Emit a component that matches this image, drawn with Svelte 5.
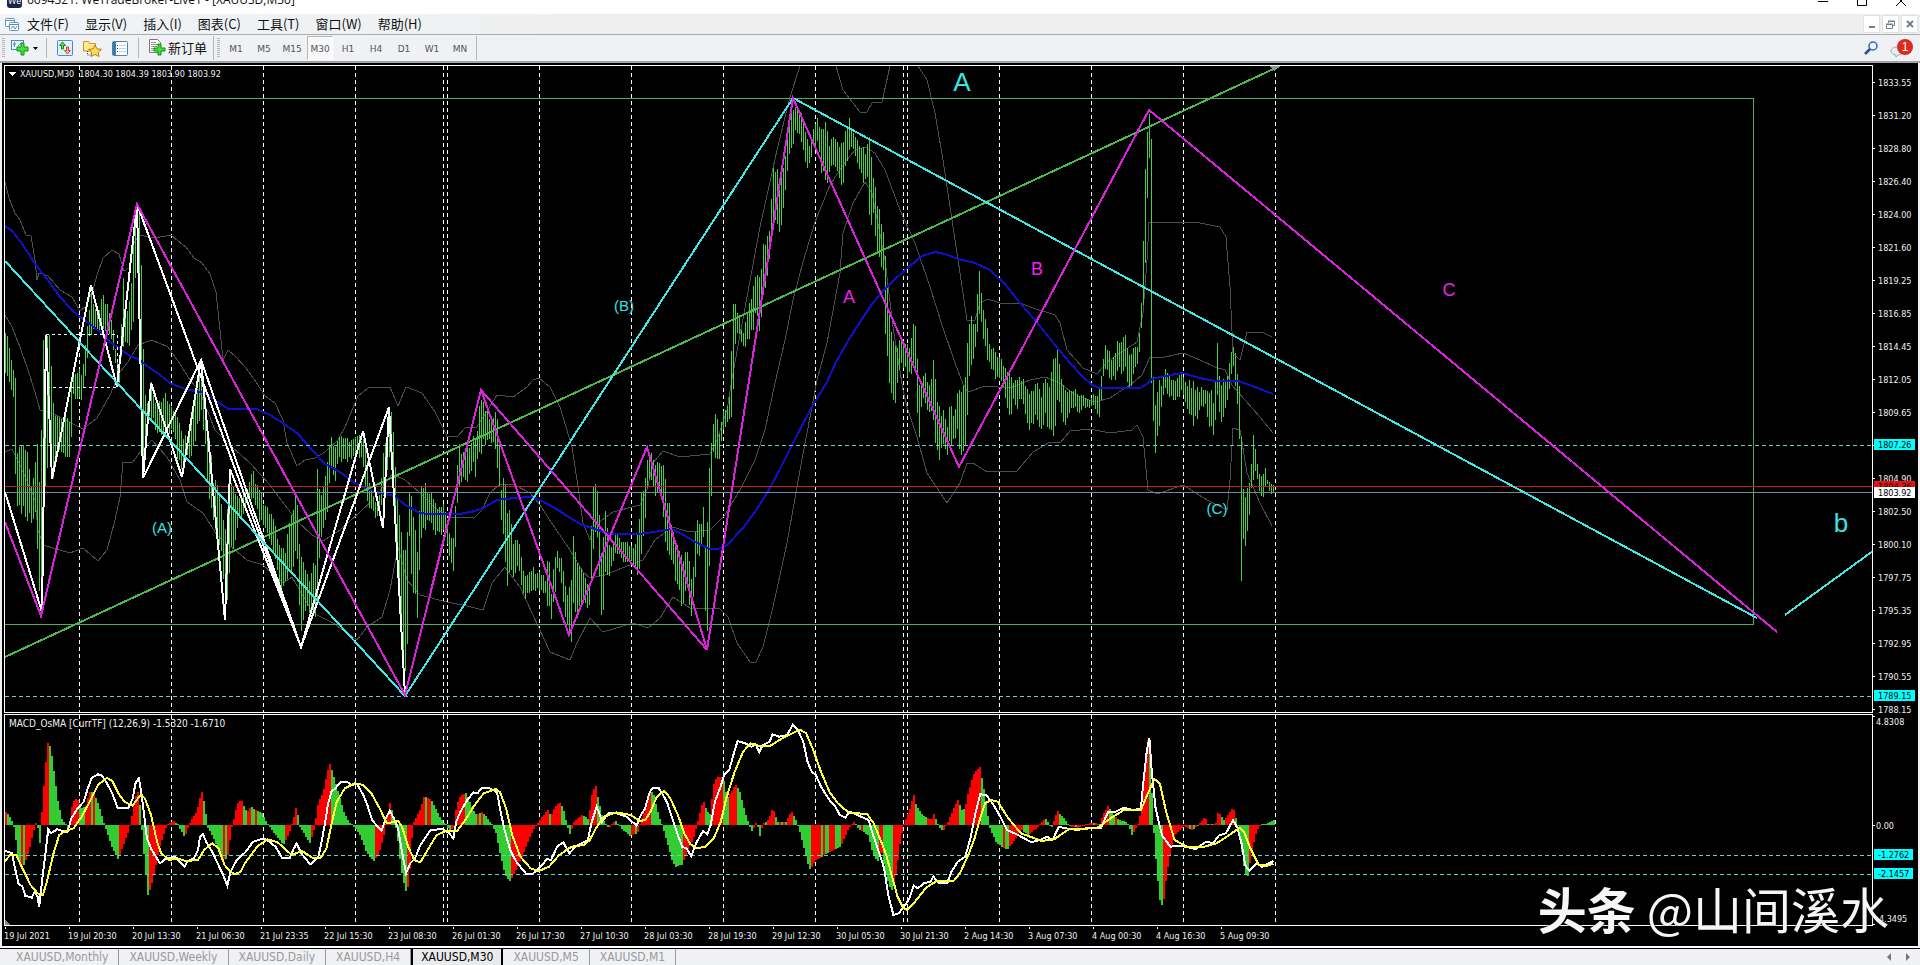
<script lang="ts">
  type Point = [number, number];
  type Bar = [number, number, number];

  const menus = ["文件(F)", "显示(V)", "插入(I)", "图表(C)", "工具(T)", "窗口(W)", "帮助(H)"];
  const timeframes = ["M1", "M5", "M15", "M30", "H1", "H4", "D1", "W1", "MN"];
  const tabs = ["Monthly", "Weekly", "Daily", "H4", "M30", "M5", "M1"];

  let activeFrame: string = "M30";
  let activeTab: string = "M30";

  const priceLabels = [
    "1833.55", "1831.20", "1828.80", "1826.40", "1824.00", "1821.60", "1819.25",
    "1816.85", "1814.45", "1812.05", "1809.65", "", "1804.90", "1802.50",
    "1800.10", "1797.75", "1795.35", "1792.95", "1790.55", "1788.15",
  ];

  const dates = [
    "19 Jul 2021", "19 Jul 20:30", "20 Jul 13:30", "21 Jul 06:30", "21 Jul 23:35",
    "22 Jul 15:30", "23 Jul 08:30", "26 Jul 01:30", "26 Jul 17:30", "27 Jul 10:30",
    "28 Jul 03:30", "28 Jul 19:30", "29 Jul 12:30", "30 Jul 05:30", "30 Jul 21:30",
    "2 Aug 14:30", "3 Aug 07:30", "4 Aug 00:30", "4 Aug 16:30", "5 Aug 09:30",
  ];

  const separators = [79, 171, 263, 355, 443, 447, 539, 631, 723, 815, 903, 907, 999, 1091, 1183, 1275];

  // x, high, low of the price range
  const range: Bar[] = [
    [5,335,368],[8,345,385],[12,362,392],[14,370,405],[15,380,475],[17,455,500],[22,445,510],[27,460,515],[32,490,523],
    [35,462,510],[37,440,550],[40,500,605],[42,350,610],[44,340,500],[46,334,480],[50,345,420],[52,400,478],[57,420,450],
    [62,425,450],[66,420,453],[69,425,453],[70,385,450],[73,375,395],[78,372,395],[82,378,400],[84,355,380],[86,340,370],
    [90,295,330],[94,305,325],[98,318,330],[101,296,325],[104,300,325],[108,305,330],[112,325,340],[115,350,365],
    [118,365,390],[120,340,370],[123,285,345],[126,320,343],[130,300,340],[133,240,320],[136,210,260],[138,205,260],
    [140,225,300],[142,300,470],[144,390,460],[147,400,430],[150,385,415],[155,400,425],[160,405,435],[165,395,430],
    [170,405,430],[175,412,440],[180,430,470],[184,440,460],[190,430,455],[195,400,440],[200,365,410],[204,385,430],
    [208,430,500],[213,480,520],[220,500,540],[225,530,610],[228,500,590],[230,480,545],[233,490,550],[238,500,520],
    [243,495,515],[248,485,500],[252,473,495],[258,490,515],[264,505,525],[270,515,540],[276,530,560],[280,555,590],
    [285,550,585],[290,520,570],[295,500,555],[298,520,560],[300,560,640],[304,565,610],[308,580,605],[312,570,615],
    [315,560,620],[317,475,600],[320,490,540],[324,490,530],[328,450,500],[330,437,460],[334,445,485],[338,435,455],
    [342,435,460],[348,442,460],[353,440,455],[357,435,455],[362,440,460],[365,450,490],[370,490,510],[375,500,515],
    [380,495,510],[384,445,490],[386,435,480],[388,410,450],[392,420,480],[396,490,540],[400,520,600],[404,560,690],
    [407,530,640],[409,495,540],[412,505,590],[415,530,590],[417,550,610],[420,490,550],[424,485,525],[428,490,520],
    [432,500,525],[436,510,532],[440,505,535],[444,500,530],[448,535,550],[452,540,565],[454,535,570],[456,480,520],
    [458,450,495],[462,450,475],[466,455,485],[470,445,470],[474,430,460],[476,440,480],[478,420,445],[480,395,465],
    [482,400,440],[486,412,445],[492,420,440],[496,412,450],[499,435,490],[501,490,525],[504,480,545],[507,510,590],
    [510,515,560],[513,540,575],[518,545,565],[521,555,580],[524,580,597],[530,568,590],[535,572,588],[540,575,590],
    [545,580,595],[548,555,600],[551,590,620],[554,560,600],[557,552,570],[561,560,580],[565,590,615],[568,600,630],
    [571,575,635],[573,540,600],[576,560,615],[579,565,610],[582,575,600],[585,580,600],[588,590,615],[590,570,600],
    [592,485,560],[595,480,530],[598,490,535],[600,550,610],[602,560,620],[604,505,590],[606,520,560],[608,545,580],
    [612,545,560],[616,530,550],[620,545,558],[625,545,565],[630,545,558],[634,545,565],[636,550,575],[638,530,570],
    [640,503,560],[644,490,530],[646,465,510],[648,450,475],[652,460,485],[656,465,495],[659,460,490],[662,468,500],
    [664,475,525],[667,500,555],[670,515,550],[674,540,575],[678,550,580],[682,560,610],[686,550,580],[690,570,620],
    [692,590,610],[695,530,580],[697,520,555],[700,530,550],[703,510,540],[706,560,640],[708,480,610],[710,460,520],
    [712,440,480],[713,420,455],[715,415,455],[718,430,455],[720,435,455],[722,410,430],[726,410,425],[730,395,420],
    [732,308,415],[735,310,345],[738,315,330],[742,335,345],[746,320,345],[749,305,335],[753,290,325],[757,275,310],
    [760,285,330],[762,245,305],[766,250,280],[768,225,260],[770,230,250],[772,165,210],[776,175,220],[780,180,225],
    [784,165,195],[787,140,175],[790,110,145],[794,105,135],[798,112,130],[802,115,145],[806,140,165],[810,145,160],
    [814,125,145],[817,118,140],[821,135,170],[825,130,175],[829,145,175],[832,135,165],[836,145,165],[840,150,185],
    [843,145,180],[848,120,150],[852,130,145],[858,145,165],[864,150,180],[868,150,180],[870,140,245],[872,175,200],
    [876,200,240],[880,220,260],[883,235,270],[885,260,330],[888,310,375],[892,340,390],[895,350,405],[898,345,370],
    [902,345,365],[906,345,370],[909,345,375],[912,335,380],[914,315,350],[916,340,400],[919,390,430],[922,375,395],
    [926,378,405],[930,385,410],[933,360,420],[936,395,450],[940,410,455],[944,410,440],[946,435,460],[950,400,440],
    [954,420,440],[958,390,430],[960,400,460],[963,390,450],[966,370,435],[968,330,390],[970,320,360],[974,330,360],
    [977,300,330],[979,278,310],[982,300,330],[985,320,350],[990,350,365],[994,352,375],[998,360,375],[1002,362,380],
    [1006,375,400],[1010,370,415],[1013,385,400],[1016,380,410],[1020,378,395],[1024,385,410],[1028,395,430],
    [1032,395,425],[1036,380,415],[1040,395,430],[1045,385,415],[1050,385,430],[1053,360,440],[1057,345,400],
    [1060,380,410],[1064,395,425],[1068,390,420],[1072,390,405],[1078,395,412],[1083,395,405],[1088,400,408],
    [1093,395,405],[1097,395,415],[1100,390,420],[1102,360,380],[1106,345,370],[1110,358,380],[1114,355,378],
    [1117,345,370],[1121,345,370],[1125,340,365],[1130,355,395],[1134,350,365],[1138,345,365],[1140,320,340],
    [1142,290,320],[1144,180,280],[1146,160,230],[1148,118,160],[1150,120,160],[1151,140,380],[1152,370,400],
    [1155,400,445],[1158,385,440],[1160,390,410],[1165,370,390],[1170,378,395],[1176,378,398],[1182,375,390],
    [1188,385,410],[1192,385,422],[1196,390,420],[1200,390,405],[1205,390,405],[1210,395,430],[1213,400,430],
    [1217,350,395],[1220,390,425],[1224,380,410],[1228,375,395],[1231,350,370],[1233,345,365],[1237,370,400],
    [1239,390,435],[1241,440,578],[1243,485,535],[1246,500,540],[1249,480,510],[1251,465,490],[1253,430,475],
    [1256,460,470],[1259,475,490],[1262,480,500],[1265,470,490],[1267,480,485],[1270,485,495],[1273,485,492],
  ];

  const average = "5,226 12,231 20,241 27,251 33,261 42,273 50,283 60,297 70,308 80,317 90,324 100,332 110,342 120,349 130,356 138,359 150,368 160,375 170,383 185,389 205,393 215,400 228,409 257,409 270,415 283,423 298,434 312,450 325,464 340,472 355,483 370,490 385,494 395,496 405,505 420,513 430,514 447,514 460,514 475,511 485,507 497,500 515,498 530,497 540,500 555,508 567,516 580,524 595,529 610,534 640,534 660,531 671,529 680,533 697,543 710,549 718,549 727,545 743,528 757,509 770,488 782,465 793,443 810,410 827,382 836,362 848,341 860,322 872,304 884,290 896,278 910,266 922,256 935,252 945,254 958,259 975,263 990,270 1005,284 1020,303 1035,320 1055,345 1070,363 1082,376 1092,385 1100,388 1140,388 1147,384 1152,379 1165,376 1182,373 1200,378 1215,381 1238,381 1255,387 1273,394";

  const bands = [
    "5,182 9,198 15,213 20,220 26,235 31,236 35,260 37,280 39,273 48,276 60,290 72,297 80,311 86,306 93,290 97,275 103,258 112,250 119,254 124,271 129,268 133,245 139,235 155,238 171,235 178,241 186,247 194,258 202,263 210,274 216,292 220,330 223,360 228,350 236,357 246,368 256,382 265,396 275,403 283,420 287,443 297,466 305,460 315,458 325,452 338,440 345,427 358,396 368,388 390,387 398,406 406,387 422,393 435,412 447,436 457,437 465,428 477,427 497,395 513,397 527,387 533,380 539,378 550,387 560,407 572,447 578,487 583,523 590,540 593,527 613,512 640,505 647,490 653,463 663,451 680,457 700,455 710,454 717,440 727,410 733,373 747,297 760,227 777,150 790,97 800,66",
    "836,66 843,90 853,103 860,112 867,112 872,103 882,102 890,66",
    "918,66 927,80 935,113 943,160 952,220 960,273 967,320 975,320 980,303 988,299 1000,303 1020,303 1033,308 1055,315 1060,323 1067,350 1083,368 1097,374 1107,362 1120,353 1137,342 1143,313 1147,260 1149,222 1183,222 1200,223 1220,227 1226,237 1230,287 1233,353 1240,360 1247,332 1262,332 1272,337",
    "5,315 12,327 20,347 28,370 35,392 40,410 50,412 65,420 83,429 97,418 110,395 120,372 128,362 138,345 152,340 168,347 180,364 190,380 200,392 215,430 232,447 250,463 270,485 285,505 297,521 312,535 323,541 340,530 360,512 375,498 392,474 405,480 420,493 435,508 450,517 475,517 482,510 490,493 500,484 515,485 530,493 540,505 555,528 570,550 583,572 590,578 605,575 622,568 643,560 655,540 672,527 690,532 710,530 725,515 740,490 755,460 765,430 775,383 785,340 793,300 803,262 815,222 830,185 845,162 855,150 865,147 875,153 885,170 900,210 915,243 930,287 942,325 955,363 963,384 968,392 985,386 1010,388 1030,380 1045,377 1060,383 1075,395 1095,402 1110,398 1130,385 1142,375 1150,357 1165,357 1183,353 1200,360 1215,367 1225,370 1232,385 1245,400 1260,417 1273,433",
    "5,452 12,449 20,465 35,500 38,530 43,545 70,553 83,548 98,561 107,550 115,520 120,497 123,462 133,462 140,452 152,440 167,457 180,480 187,502 203,513 217,535 247,560 263,565 283,583 292,577 313,613 333,623 357,640 367,627 382,617 390,590 398,547 407,580 420,595 447,602 467,606 483,610 492,583 505,567 520,587 533,615 550,652 570,660 577,643 590,618 603,632 633,623 648,628 660,618 673,597 690,608 720,609 728,617 737,643 750,662 756,662 763,647 773,607 787,543 800,470 817,380 827,343 840,273 843,233 853,203 865,182 872,193 885,260 893,327 903,390 907,407 917,437 927,473 947,503 960,483 967,463 973,463 987,472 1017,471 1033,452 1050,442 1060,443 1070,431 1090,429 1110,433 1132,430 1137,425 1143,437 1148,490 1157,494 1183,485 1207,500 1227,510 1230,480 1233,428 1240,430 1247,473 1260,503 1272,526",
  ];

  // The oscillator traces are recorded in two spans, each with its own x scale
  const histoA: Point[] = [[10,318],[20,330],[30,355],[35,385],[42,470],[48,485],[58,480],[70,430],[80,380],[86,352],[92,375],[96,418],[99,345],[108,200],[115,113],[122,125],[130,200],[140,290],[150,345],[158,357],[165,375],[170,340],[176,290],[186,278],[198,310],[208,300],[218,262],[226,258],[240,300],[255,365],[270,420],[288,465],[300,420],[315,370],[325,310],[334,250],[340,290],[345,370],[352,470],[360,570],[368,545],[378,490],[390,420],[405,365],[422,347],[435,362],[450,398],[462,355],[480,318],[492,258],[500,305],[506,365],[525,410],[540,460],[555,462],[565,370],[580,295],[588,283],[603,322],[612,305],[640,325],[655,360],[668,382],[680,400],[692,420],[705,390],[715,350],[724,303],[732,365],[745,390],[757,415],[768,370],[778,290],[790,260],[805,172],[812,200],[825,255],[840,320],[855,355],[868,368],[880,390],[895,440],[913,470],[925,450],[937,400],[945,345],[953,295],[962,330],[972,400],[980,490],[992,560],[1000,540],[1005,420],[1012,350],[1025,320],[1037,275],[1055,285],[1065,310],[1080,345],[1100,375],[1110,370],[1116,300],[1125,275],[1140,262],[1155,310],[1165,330],[1180,320],[1200,355],[1212,380],[1222,440],[1235,510],[1248,530],[1260,500],[1275,460],[1300,385],[1320,345],[1340,315],[1348,335],[1355,310],[1370,292],[1380,320],[1388,365],[1395,390],[1403,352],[1425,328],[1440,345],[1448,270],[1457,238],[1465,290],[1475,345],[1490,370],[1505,345],[1520,370],[1540,392],[1560,385]];
  const histoB: Point[] = [[0,345],[12,310],[22,255],[30,265],[40,320],[50,360],[60,400],[75,470],[82,485],[97,480],[110,440],[125,400],[135,350],[148,285],[158,320],[165,330],[172,240],[180,218],[195,215],[205,280],[215,260],[225,237],[235,260],[245,310],[258,365],[265,380],[275,350],[283,395],[290,355],[303,345],[313,308],[325,350],[345,350],[358,318],[370,350],[380,390],[395,470],[402,495],[415,465],[430,455],[450,440],[475,425],[490,380],[505,350],[520,375],[540,390],[550,440],[562,470],[572,440],[582,510],[595,560],[605,520],[615,420],[622,370],[630,340],[640,310],[648,265],[655,305],[670,330],[690,345],[697,325],[705,360],[718,378],[730,350],[740,320],[754,283],[762,315],[770,310],[778,260],[790,210],[805,183],[812,230],[820,290],[828,365],[845,415],[870,435],[885,410],[905,375],[920,390],[940,370],[950,355],[962,340],[975,370],[990,317],[1005,340],[1020,365],[1040,368],[1060,358],[1075,352],[1090,358],[1098,330],[1110,303],[1122,330],[1140,348],[1155,350],[1167,390],[1180,360],[1190,310],[1197,200],[1205,100],[1210,130],[1214,260],[1218,370],[1226,500],[1235,608],[1242,590],[1250,500],[1260,430],[1272,385],[1290,362],[1310,375],[1325,360],[1340,335],[1348,358],[1365,360],[1372,318],[1385,345],[1395,330],[1407,305],[1415,345],[1422,380],[1432,480],[1441,522],[1450,450],[1460,390],[1470,362],[1490,355],[1505,345]];
  const macdA: Point[] = [[12,437],[30,445],[35,480],[45,535],[55,545],[62,572],[78,578],[85,560],[92,575],[96,605],[104,520],[112,440],[118,373],[125,385],[140,373],[165,382],[175,340],[190,310],[205,290],[215,250],[225,218],[240,208],[250,212],[262,235],[275,265],[288,308],[315,308],[325,280],[332,235],[340,220],[346,260],[352,320],[360,400],[372,435],[392,475],[405,462],[428,455],[440,470],[452,485],[460,468],[475,460],[485,435],[490,395],[497,387],[505,410],[520,440],[533,475],[545,505],[557,542],[565,500],[580,465],[600,443],[620,410],[645,400],[660,410],[675,425],[692,460],[710,458],[718,435],[727,415],[738,445],[760,478],[770,468],[780,455],[788,410],[797,350],[803,300],[812,260],[822,250],[835,230],[850,230],[862,240],[875,237],[890,270],[900,300],[912,345],[925,365],[935,378],[945,340],[955,318],[965,340],[975,370],[985,440],[995,505],[1005,475],[1017,460],[1030,420],[1055,375],[1085,372],[1100,385],[1111,400],[1118,350],[1128,320],[1145,285],[1160,262],[1170,265],[1180,248],[1200,250],[1218,262],[1225,310],[1235,370],[1250,435],[1265,470],[1290,508],[1305,506],[1325,485],[1340,462],[1350,465],[1365,425],[1380,412],[1395,445],[1410,425],[1440,405],[1450,350],[1462,305],[1470,330],[1475,350],[1490,325],[1510,325],[1535,335],[1560,362]];
  const macdB: Point[] = [[0,335],[12,310],[22,265],[30,248],[45,250],[55,270],[65,295],[78,345],[90,390],[100,425],[110,430],[122,453],[135,410],[150,378],[160,388],[168,360],[178,290],[190,250],[200,210],[212,195],[222,150],[232,108],[250,115],[265,125],[275,118],[283,142],[292,120],[308,110],[315,88],[330,95],[350,90],[363,58],[375,75],[388,110],[398,170],[408,200],[418,210],[430,245],[450,285],[462,300],[475,330],[488,338],[498,320],[520,332],[543,345],[555,395],[570,450],[580,490],[590,570],[602,630],[615,625],[630,600],[640,580],[650,542],[660,550],[675,535],[690,530],[697,515],[710,535],[730,535],[740,500],[755,470],[773,455],[785,400],[797,325],[808,268],[822,270],[832,285],[850,320],[872,375],[895,388],[930,412],[950,405],[968,395],[980,405],[995,365],[1010,370],[1040,375],[1060,370],[1095,368],[1112,322],[1130,320],[1150,308],[1170,315],[1190,312],[1197,220],[1204,140],[1210,98],[1216,200],[1225,310],[1240,390],[1260,425],[1285,422],[1320,432],[1345,410],[1362,415],[1375,392],[1392,385],[1409,345],[1420,370],[1430,420],[1438,480],[1448,498],[1465,475],[1478,485],[1505,468]];
  const signalA: Point[] = [[12,468],[25,450],[40,450],[55,490],[75,540],[92,565],[105,570],[115,530],[130,450],[145,390],[160,378],[180,370],[200,335],[220,290],[240,240],[262,218],[275,228],[290,265],[305,290],[325,302],[335,285],[345,270],[355,280],[370,330],[385,410],[395,445],[415,465],[435,460],[455,468],[485,465],[500,435],[520,415],[535,430],[550,480],[565,500],[575,508],[590,500],[600,475],[630,425],[655,403],[680,412],[715,450],[740,438],[765,458],[785,460],[800,430],[810,370],[825,290],[845,250],[870,235],[890,240],[910,265],[930,310],[948,355],[975,348],[985,365],[1000,425],[1015,465],[1030,472],[1050,430],[1070,390],[1095,377],[1120,378],[1140,345],[1160,305],[1185,265],[1215,252],[1225,262],[1240,310],[1255,390],[1275,455],[1300,490],[1320,498],[1345,485],[1370,450],[1400,425],[1430,420],[1445,405],[1460,370],[1480,335],[1510,322],[1545,330]];
  const signalB: Point[] = [[0,348],[12,345],[25,320],[40,275],[58,258],[72,280],[90,330],[105,385],[120,418],[135,430],[155,425],[175,400],[192,350],[205,280],[225,200],[245,140],[262,115],[285,123],[310,122],[340,98],[380,74],[395,85],[410,130],[430,200],[450,260],[470,295],[495,322],[540,328],[555,355],[570,400],[585,450],[600,520],[612,575],[625,608],[635,615],[650,595],[680,548],[705,528],[745,528],[760,505],[780,450],[795,400],[808,340],[820,295],[835,285],[850,290],[875,340],[905,385],[955,408],[985,402],[1020,372],[1085,370],[1120,338],[1150,315],[1190,316],[1205,270],[1222,222],[1235,235],[1250,320],[1270,405],[1300,425],[1335,427],[1370,415],[1400,390],[1425,368],[1435,380],[1450,430],[1470,480],[1490,482],[1505,476]];

  const ZERO = 825;

  function join(a: Point[], b: Point[]): Point[] {
    return [
      ...a.map(([x, y]): Point => [x / 2.45, 705 + y / 3]),
      ...b.map(([x, y]): Point => [640 + x / 2.376, 705 + y / 3]),
    ];
  }

  function toPoints(list: Point[]) {
    return list.map(([x, y]) => `${x.toFixed(1)},${y.toFixed(1)}`).join(" ");
  }

  function sample(list: number[][], x: number, column: number) {
    const i = list.findIndex((p) => p[0] >= x);
    if (i < 0) return list[list.length - 1][column];
    if (i === 0) return list[0][column];
    const a = list[i - 1];
    const b = list[i];
    return a[column] + ((b[column] - a[column]) * (x - a[0])) / (b[0] - a[0]);
  }

  function wobble(n: number) {
    const s = Math.sin(n * 12.9898) * 43758.5453;
    return s - Math.floor(s);
  }

  function pricePath() {
    let d = "";
    for (let x = 5; x <= 1273; x += 2) {
      const high = sample(range, x, 1);
      const low = sample(range, x, 2);
      const slack = Math.min(14, (low - high) * 0.35);
      const top = Math.round(high + (wobble(x) - 0.6) * slack);
      const bottom = Math.round(low - (wobble(x + 7) - 0.6) * slack);
      d += `M${x + 0.5} ${top}V${bottom}`;
    }
    return d;
  }

  function histogram() {
    const values = join(histoA, histoB);
    let up = "";
    let down = "";
    let last = ZERO;
    for (let x = 5; x <= 1273; x += 2) {
      const y = Math.round(sample(values, x, 1));
      const rising = Math.abs(y - last) <= 1 ? wobble(x) > 0.5 : y < last;
      const box = `M${x} ${ZERO}V${y === ZERO ? y - 1 : y}h2V${ZERO}z`;
      if (rising) up += box;
      else down += box;
      last = y;
    }
    return { up, down };
  }

  const prices = pricePath();
  const osma = histogram();
  const macd = toPoints(join(macdA, macdB));
  const signal = toPoints(join(signalA, signalB));
</script>

<div class="terminal">
  <header class="title-bar">
    <svg class="app-icon" width="15" height="16" viewBox="0 0 15 16">
      <rect width="15" height="16" rx="3" fill="#1c2546" />
      <text x="1" y="12" font-size="9" fill="#fff">We</text>
    </svg>
    <span class="title">6694321: WeTradeBroker-Live1 - [XAUUSD,M30]</span>
    <div class="window-controls">
      <button aria-label="Minimize"><svg width="12" height="12"><path d="M1 6.500h10" stroke="#000" /></svg></button>
      <button aria-label="Maximize"><svg width="12" height="12"><path d="M1.500 1.500h9v9h-9z" fill="none" stroke="#000" /></svg></button>
      <button aria-label="Close"><svg width="12" height="12"><path d="M1 1l10 10M11 1l-10 10" stroke="#000" /></svg></button>
    </div>
  </header>

  <nav class="menu-bar">
    <svg class="menu-icon" width="14" height="13" viewBox="0 0 14 13" fill="#fff" stroke="#5b93bd">
      <rect x="0.500" y="0.500" width="9" height="8" rx="1" />
      <path d="M1 2.500h8" />
      <rect x="4.500" y="4.500" width="9" height="8" rx="1" />
      <path d="M5 6.500h8M6 11l2-3 2 3 2-3" fill="none" />
    </svg>
    {#each menus as menu}
      <button>{menu}</button>
    {/each}
    <div class="child-controls">
      <button aria-label="Minimize chart"><svg width="8" height="8"><path d="M1 7h6" stroke="#71808e" stroke-width="2" /></svg></button>
      <button aria-label="Restore chart">
        <svg width="9" height="9" fill="none" stroke="#71808e"><path d="M2.500 3V1.500h6v4h-2M2 1h7" /><path d="M.500 4.500h6v4h-6zM0 4h7" /></svg>
      </button>
      <button aria-label="Close chart"><svg width="8" height="8"><path d="M1 1l6 6M7 1l-6 6" stroke="#71808e" stroke-width="2" /></svg></button>
    </div>
  </nav>

  <div class="tool-bar">
    <span class="grip"></span>
    <button class="tool new-chart" aria-label="New chart">
      <svg width="27" height="16" viewBox="0 0 27 16">
        <rect x="0.500" y="0.500" width="12" height="9" fill="#e9f3fa" stroke="#4e88b4" />
        <path d="M3.500 2v5M2 4h3M7 6l3-3" stroke="#4e88b4" fill="none" />
        <path d="M10 3h3v4h4v4h-4v4h-3v-4H6V7h4z" fill="#3fe03c" stroke="#178a18" />
        <path d="M22 7h5l-2.500 3z" />
      </svg>
    </button>
    <span class="divider"></span>
    <button class="tool" aria-label="Market watch">
      <svg width="16" height="16" viewBox="0 0 16 16">
        <rect x="0.500" y="0.500" width="15" height="15" rx="1" fill="#dff0fa" stroke="#4391c4" />
        <path d="M5.500 2l3 3.500h-2V9h-2V5.500h-2z" fill="#5ddb58" stroke="#18861b" />
        <path d="M10.500 14l3-3.500h-2V7h-2v3.500h-2z" fill="#ffb48d" stroke="#d1491a" />
      </svg>
    </button>
    <button class="tool favourites" aria-label="Navigator">
      <svg width="19" height="17" viewBox="0 0 19 17">
        <path d="M.500 11V1.500h5l1 2h6V11z" fill="#ffe88e" stroke="#c99a23" />
        <path d="M4.500 11v4h5" stroke="#444" stroke-dasharray="1 1" fill="none" />
        <path d="M12 5l2 3.800 4.500.6-3.300 3 .9 4.100-4.100-2.100L8 16.500l.8-4.100-3.300-3 4.500-.6z" fill="#ffd957" stroke="#b67a10" />
      </svg>
    </button>
    <button class="tool" aria-label="Data window">
      <svg width="16" height="15" viewBox="0 0 16 15">
        <rect x="0.500" y="0.500" width="15" height="14" rx="1" fill="#fff" stroke="#4a83ad" />
        <path d="M1 1h3v13H1z" fill="#3f79a8" />
        <path d="M5 4.500h1M5 7.500h1M5 10.500h1" stroke="#345" />
        <path d="M7 4.500h7M7 7.500h7M7 10.500h7" stroke="#b9d5e9" />
      </svg>
    </button>
    <span class="divider"></span>
    <button class="tool order">
      <svg width="17" height="18" viewBox="0 0 17 18">
        <path d="M.500.500h8l3 3v10H.500z" fill="#fff" stroke="#777" />
        <path d="M2 3.500h5M2 5.500h7M2 7.500h6M2 9.500h5M2 11.500h4" stroke="#999" />
        <path d="M9 5h3v4h4v3h-4v4H9v-4H5V9h4z" fill="#3fe03c" stroke="#178a18" />
      </svg>
      <span>新订单</span>
    </button>
    <span class="divider tall"></span>
    <span class="grip"></span>
    <div class="frames">
      {#each timeframes as frame}
        <button class:pressed={frame === activeFrame} on:click={() => (activeFrame = frame)}>{frame}</button>
      {/each}
    </div>
    <span class="divider tall"></span>
    <div class="tool-end">
      <button class="tool" aria-label="Search">
        <svg width="14" height="14" viewBox="0 0 14 14" fill="none">
          <circle cx="9" cy="5" r="4" stroke="#3567b8" stroke-width="1.500" fill="#eef5fd" />
          <path d="M6 8l-5 5" stroke="#264a95" stroke-width="2.500" />
        </svg>
      </button>
      <button class="tool" aria-label="Notifications">
        <svg class="badge" width="24" height="22" viewBox="0 0 24 22">
          <path d="M7 10c5 0 6 2 6 4s-2 4-5 4l-2 2-.500-2C3 17 1 16 1 14s2-4 6-4z" fill="#e9edf0" stroke="#9fa8af" />
          <circle cx="15" cy="10" r="8" fill="#dc2a1f" />
          <text x="15" y="14" font-size="12" fill="#fff" text-anchor="middle">1</text>
        </svg>
      </button>
    </div>
  </div>

  <main class="chart">
    <div class="pane">
      <svg class="price" height="646" role="img" aria-label="XAUUSD M30">
        <g transform="translate(-5 -66)">
          <g class="separator">
            {#each separators as x}
              <path d="M{x + 0.5} 66V712" />
            {/each}
          </g>
          <g class="band">
            {#each bands as band}
              <polyline points={band} />
            {/each}
          </g>
          <path class="bars" d={prices} />
          <polyline class="average" points={average} />
          <path class="box" d="M4 98.500H1753.500V624.500H4" />
          <path class="level" d="M5 445.500H4000M5 696.500H4000" />
          <path d="M5 486.500H4000" stroke="#c42020" />
          <path d="M5 492.500H4000" stroke="#778899" />
          <path class="dashed" d="M46 334.500H117.500V387.500H46" />
          <path class="trend green" d="M5 657L1280 66" />
          <g class="trend white">
            <path d="M5 492L42 612L46 335L52 479L91 285L117 387L137 204L143 478L151 383L182 477L201 360L225 620L230 469L301 647L363 431L383 528L389 407L405 695" />
            <path d="M137 204L301 647L389 407" />
            <path d="M143 478L201 360L301 647" />
          </g>
          <path class="trend cyan" d="M5 261L405 696L793 98L1757 618M1785 615L1873 551" />
          <path class="trend magenta" d="M5 522L41 616L137 204L405 695L481 390L569 635L647 447L707 650L793 98L959 467L1149 110L1777 632M481 390L707 650" />
          <path d="M1269 66h10l-5 5z" fill="#8497a8" />
          <path d="M8 72h8l-4 4z" fill="#fff" />
          <text class="caption" x="20" y="77">XAUUSD,M30&nbsp; 1804.30 1804.39 1803.90 1803.92</text>
          <g class="wave cyan-text">
            <text class="big" x="962" y="91">A</text>
            <text class="big" x="1841" y="532">b</text>
            <text class="small" x="162" y="533">(A)</text>
            <text class="small" x="624" y="311">(B)</text>
            <text class="small" x="1217" y="514">(C)</text>
          </g>
          <g class="wave magenta-text">
            <text x="849" y="303">A</text>
            <text x="1037" y="275">B</text>
            <text x="1449" y="296">C</text>
          </g>
        </g>
      </svg>
    </div>
    <svg class="axis" width="46" height="648">
      <g transform="translate(-1873 -65)">
        {#each priceLabels as label, i}
          <path d="M1873 {82.5 + i * 33}h2" stroke="#fff" />
          <text x="1878" y={86 + i * 33}>{label}</text>
        {/each}
        <g class="tag">
          <rect x="1874" y="439" width="41" height="11" fill="#0ff" />
          <text x="1878" y="448">1807.26</text>
          <rect x="1874" y="481" width="41" height="11" fill="#e81010" />
          <text x="1878" y="490">1804.36</text>
          <rect x="1874" y="487" width="41" height="11" fill="#fff" />
          <text x="1878" y="496">1803.92</text>
          <rect x="1874" y="690" width="41" height="11" fill="#0ff" />
          <text x="1878" y="699">1789.15</text>
        </g>
      </g>
    </svg>

    <div class="pane">
      <svg height="210" role="img" aria-label="MACD OsMA">
        <g transform="translate(-5 -715)">
          <g class="separator">
            {#each separators as x}
              <path d="M{x + 0.5} 715V925" />
            {/each}
          </g>
          <path d={osma.up} fill="#ff0000" />
          <path d={osma.down} fill="#32cd32" />
          <path class="level" d="M5 855.500H4000M5 874.500H4000" />
          <polyline class="trend white" points={macd} />
          <polyline class="trend yellow" points={signal} />
          <path d="M5 919v6h5z" fill="#888" />
          <text class="caption indicator" x="9" y="727">MACD_OsMA [CurrTF] (12,26,9) -1.5320 -1.6710</text>
        </g>
      </svg>
    </div>
    <svg class="axis" width="46" height="212">
      <g transform="translate(-1873 -714)">
        <path d="M1873 716.500h2M1873 825.500h2M1873 924.500h2" stroke="#fff" />
        <text x="1876" y="725">4.8308</text>
        <text x="1876" y="829">0.00</text>
        <text x="1876" y="922">-4.3495</text>
        <g class="tag">
          <rect x="1874" y="849" width="39" height="11" fill="#0ff" />
          <text x="1878" y="858">-1.2762</text>
          <rect x="1874" y="868" width="39" height="11" fill="#0ff" />
          <text x="1878" y="877">-2.1457</text>
        </g>
      </g>
    </svg>

    <div class="dates">
      {#each dates as date}
        <span>{date}</span>
      {/each}
    </div>
    <div class="watermark"><strong>头条</strong> @山间溪水</div>
  </main>

  <footer class="tabs">
    {#each tabs as tab}
      <button class:active={tab === activeTab} on:click={() => (activeTab = tab)}>XAUUSD,{tab}</button>
    {/each}
    <div class="scrollers">
      <button aria-label="Previous tabs"><svg width="4" height="8"><path d="M4 0v8L0 4z" fill="#777" /></svg></button>
      <button aria-label="Next tabs"><svg width="4" height="8"><path d="M0 0v8l4-4z" fill="#777" /></svg></button>
    </div>
  </footer>
</div>

<style>
  :global(body) {
    margin: 0;
    background: #f0f1f4;
    overflow: hidden;
  }

  .terminal {
    font-family: "Open Sans", "Noto Sans CJK SC", sans-serif;
    background: #f0f1f4;
    color: #111;
  }

  button {
    border: 0;
    padding: 0;
    background: none;
    color: inherit;
    font: inherit;
    white-space: nowrap;
    display: flex;
    align-items: center;
    justify-content: center;
  }

  svg {
    display: block;
  }

  .title-bar {
    display: flex;
    align-items: flex-end;
    gap: 5px;
    height: 8px;
    padding: 0 13px 6px 7px;
    background: #fff;
    overflow: hidden;
  }

  .app-icon {
    flex: none;
  }

  .title {
    font-size: 12px;
    line-height: 16px;
    white-space: nowrap;
  }

  .window-controls {
    display: flex;
    gap: 27px;
    margin-left: auto;
    padding-bottom: 1px;
  }

  .menu-bar {
    display: flex;
    align-items: center;
    gap: 16px;
    height: 20px;
    padding: 0 2px 0 5px;
    border-bottom: 1px solid #a5b0ae;
    background: linear-gradient(90deg, #eff4f8, #efefef 30%);
    font-family: "Noto Sans CJK SC", sans-serif;
    font-size: 13px;
    line-height: 18px;
  }

  .menu-icon {
    margin-right: -8px;
  }

  .child-controls {
    display: flex;
    gap: 2px;
    margin-left: auto;
  }

  .child-controls button {
    width: 17px;
    height: 18px;
    border: 1px solid #e2e2e2;
    background: #fff;
    box-sizing: border-box;
  }

  .tool-bar {
    display: flex;
    align-items: center;
    height: 26px;
    padding-left: 2px;
    border-bottom: 2px solid #a0a3a6;
    background: #eff1f4;
    font-family: "Noto Sans CJK SC", sans-serif;
    font-size: 13px;
  }

  .grip {
    width: 3px;
    height: 20px;
    background: repeating-linear-gradient(#b4b8bc 0 1px, transparent 1px 2px);
  }

  .divider {
    width: 1px;
    height: 20px;
    background: #b5b8bb;
  }

  .divider.tall {
    height: 24px;
  }

  .tool {
    margin: 0 0 0 10px;
  }

  .new-chart {
    margin: 0 8px 0 6px;
  }

  .tool + .divider {
    margin-left: 10px;
  }

  .new-chart + .divider {
    margin-left: 0;
  }

  .order {
    gap: 2px;
    margin-right: -4px;
  }

  .order span {
    padding-bottom: 2px;
  }

  .divider + .grip {
    margin-left: 3px;
  }

  .frames {
    display: flex;
    gap: 2px;
    padding: 0 3px;
  }

  .frames button {
    width: 26px;
    height: 24px;
    padding-top: 2px;
    border: 1px solid transparent;
    box-sizing: border-box;
    color: #555;
    font-family: "DejaVu Sans", sans-serif;
    font-size: 9px;
  }

  .frames .pressed {
    border-color: #b5b8bb #fff #fff #b5b8bb;
    background: #f8f8f9;
  }

  .tool-end {
    display: flex;
    align-items: center;
    gap: 2px;
    margin-left: auto;
    padding-right: 6px;
  }

  .badge {
    font-family: "Liberation Sans", Arial, sans-serif;
  }

  .chart {
    position: relative;
    display: grid;
    grid-template-columns: minmax(0, 1fr) 45px;
    row-gap: 1px;
    padding: 2px 0 0 2px;
    margin: 0 2px;
    background: #000;
    border-bottom: 2px solid #fff;
    font-family: "DejaVu Sans Condensed", "DejaVu Sans", sans-serif;
    font-size: 9px;
    font-stretch: condensed;
  }

  .pane {
    border: 1px solid #fff;
  }

  .pane svg {
    width: 100%;
    overflow: hidden;
  }

  .axis,
  .caption {
    fill: #f0f0f0;
  }

  .indicator {
    font-size: 10px;
  }

  .tag {
    fill: #000;
  }

  .pane path,
  .pane polyline {
    shape-rendering: crispEdges;
  }

  .separator {
    stroke: #fff;
    stroke-dasharray: 4 3;
  }

  .band {
    fill: none;
    stroke: #4b4f50;
  }

  .bars {
    stroke: #46d046;
  }

  .average {
    fill: none;
    stroke: #1010c8;
    stroke-width: 2;
  }

  .box {
    fill: none;
    stroke: #4fae55;
  }

  .level {
    stroke: #5fd6c4;
    stroke-dasharray: 4 3;
  }

  .dashed {
    fill: none;
    stroke: #fff;
    stroke-dasharray: 3 3;
  }

  .trend {
    fill: none;
    stroke-width: 2;
  }

  .green {
    stroke: #4cbb4c;
  }

  .white {
    stroke: #fff;
  }

  .yellow {
    stroke: #ffff40;
  }

  .cyan {
    stroke: #40e8e8;
  }

  .magenta {
    stroke: #dd22dd;
  }

  .wave {
    font-family: "Liberation Sans", Arial, sans-serif;
    font-size: 18px;
    text-anchor: middle;
  }

  .big {
    font-size: 26px;
  }

  .small {
    font-size: 15px;
  }

  .cyan-text {
    fill: #34e6e6;
  }

  .magenta-text {
    fill: #ee22ee;
  }

  .dates {
    grid-column: 1 / -1;
    display: flex;
    height: 19px;
    color: #f0f0f0;
    overflow: hidden;
  }

  .dates span {
    flex: none;
    width: 64px;
    line-height: 14px;
    white-space: nowrap;
  }

  .dates span::before {
    content: "";
    display: block;
    width: 1px;
    height: 2px;
    margin-left: 1px;
    background: #fff;
  }

  .watermark {
    position: absolute;
    right: 29px;
    bottom: 12px;
    color: #f6f6f6;
    font-family: "Noto Sans CJK SC", sans-serif;
    font-size: 49px;
    line-height: 52px;
    text-shadow: 0 0 2px #000;
    white-space: nowrap;
  }

  .tabs {
    display: flex;
    height: 16px;
    padding-left: 6px;
    border-top: 1px solid #000;
    color: #999;
    font-family: "DejaVu Sans Condensed", "DejaVu Sans", sans-serif;
    font-size: 12px;
    font-stretch: condensed;
  }

  .tabs > button {
    padding: 0 10px;
    border-right: 1px solid #999;
  }

  .tabs .active {
    padding: 0 8px;
    border: solid #000;
    border-width: 0 2px;
    background: #e9eaec;
    color: #000;
  }

  .scrollers {
    display: flex;
    gap: 15px;
    margin-left: auto;
    padding-right: 10px;
  }
</style>
